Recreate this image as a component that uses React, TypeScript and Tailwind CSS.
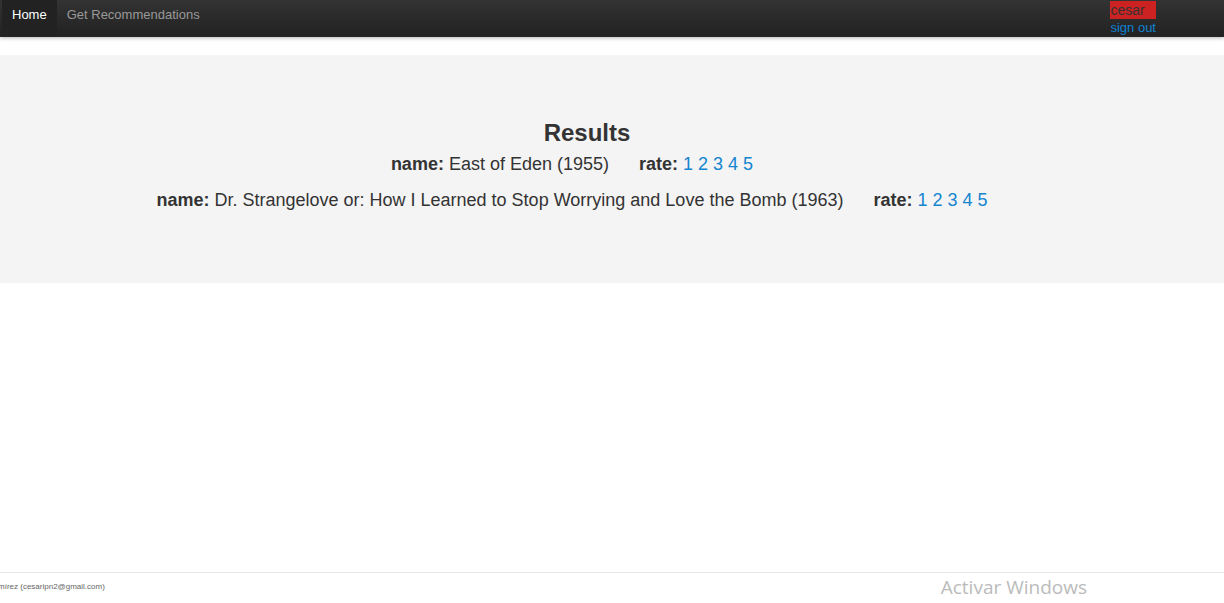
import React from "react";

type Movie = { name: string };

const movies: Movie[] = [
  { name: "East of Eden (1955)" },
  { name: "Dr. Strangelove or: How I Learned to Stop Worrying and Love the Bomb (1963)" },
];

function NavBar() {
  return (
    <nav className="flex h-[37px] justify-between border-b border-[#252525] bg-linear-to-b from-[#333333] to-[#222222] pr-17 shadow-[0_1px_4px_rgba(0,0,0,0.3)]">
      <div className="flex text-[13px] leading-5">
        <a href="#home" className="ml-0.5 bg-[#222222] px-2.5 pt-[5px] text-white">Home</a>
        <a href="#recommendations" className="px-2.5 pt-[5px] text-[#999999]">Get Recommendations</a>
      </div>
      <div className="pt-px text-[13px] leading-[18px]">
        <div className="bg-[#cc2222] text-sm leading-[18px] text-[#333333]">cesar</div>
        <a href="#sign-out" className="block text-[#0f82d2]">sign out</a>
      </div>
    </nav>
  );
}

function MovieRow({ name }: Movie) {
  return (
    <li className="flex justify-center gap-[30px]">
      <span><b>name:</b> {name}</span>
      <span className="flex gap-[5px]">
        <b>rate:</b>
        {[1, 2, 3, 4, 5].map((n) => (
          <a key={n} href={`#rate-${n}`} className="text-[#1485cf]">{n}</a>
        ))}
      </span>
    </li>
  );
}

export default function App() {
  return (
    <div className="flex min-h-screen flex-col bg-white font-['Liberation_Sans',Arial,sans-serif] text-[#333333]">
      <NavBar />
      <main className="mt-[18px] bg-[#f4f4f4] px-[60px] py-[65px]">
        <h1 className="pr-[50px] text-center text-2xl leading-[26px] font-bold">Results</h1>
        <ul className="pr-20 text-lg leading-9 text-[#333333]">
          {movies.map((m) => <MovieRow key={m.name} name={m.name} />)}
        </ul>
      </main>
      <footer className="mt-auto flex h-[31px] justify-between border-t border-[#e8e8e8] pr-[137px]">
        <p className="-ml-0.5 pt-2 text-[8px] leading-3 text-[#666666]">mírez (cesaripn2@gmail.com)</p>
        <p className="font-['Open_Sans',sans-serif] text-[19px] leading-7 text-[#bbbbbb]">Activar Windows</p>
      </footer>
    </div>
  );
}
